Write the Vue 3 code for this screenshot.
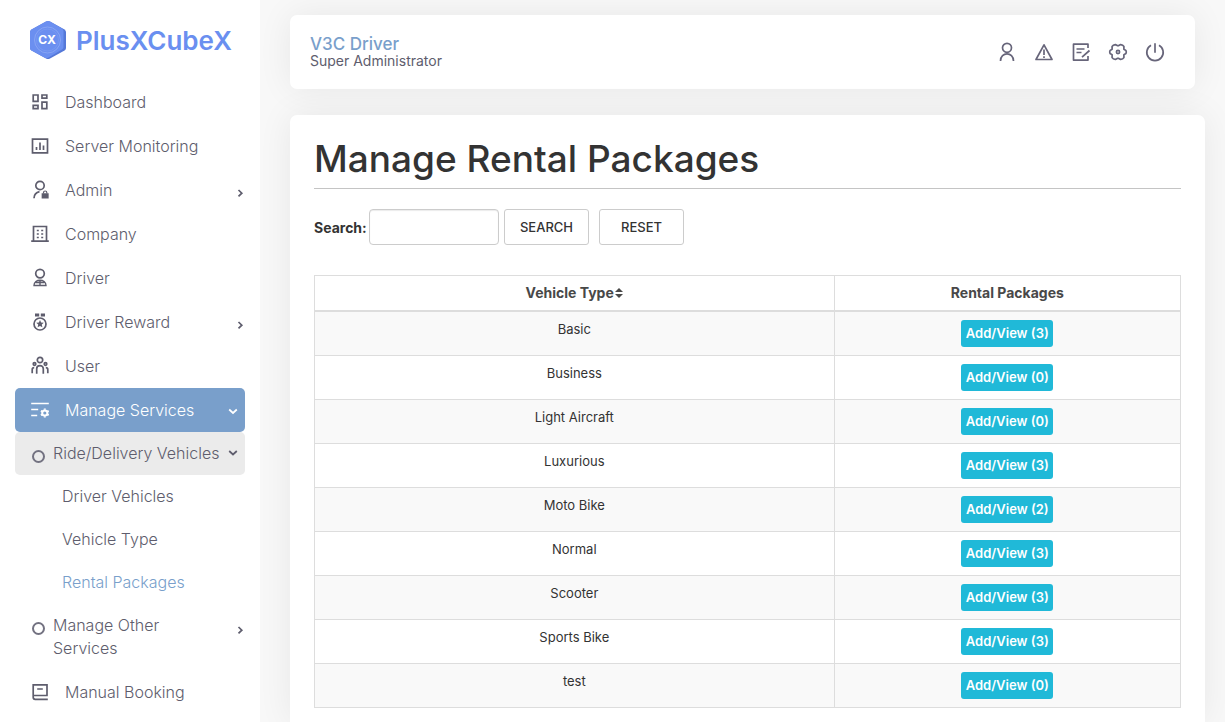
<script setup>
import { ref } from 'vue'

const search = ref('')

const topItems = [
  { label: 'Dashboard', icon: 'dashboard' },
  { label: 'Server Monitoring', icon: 'chart' },
  { label: 'Admin', icon: 'admin', arrow: true },
  { label: 'Company', icon: 'company' },
  { label: 'Driver', icon: 'driver' },
  { label: 'Driver Reward', icon: 'reward', arrow: true },
  { label: 'User', icon: 'users' },
]

const vehiclePages = [
  { label: 'Driver Vehicles' },
  { label: 'Vehicle Type' },
  { label: 'Rental Packages', current: true },
]

const rows = [
  { type: 'Basic', count: 3 },
  { type: 'Business', count: 0 },
  { type: 'Light Aircraft', count: 0 },
  { type: 'Luxurious', count: 3 },
  { type: 'Moto Bike', count: 2 },
  { type: 'Normal', count: 3 },
  { type: 'Scooter', count: 3 },
  { type: 'Sports Bike', count: 3 },
  { type: 'test', count: 0 },
]
</script>

<template>
  <div class="app">
    <aside class="sidebar">
      <a class="brand" href="#">
        <svg class="brand-mark" viewBox="0 0 36 38" aria-hidden="true">
          <path d="M16 .5q2-1 4 0l14.500 8Q36 9.500 36 11v16q0 1.500-1.500 2.500L20 37.500q-2 1-4 0L1.500 29.500Q0 28.500 0 27V11q0-1.500 1.500-2.500z" fill="#5578d8" />
          <path d="M16 .5q2-1 4 0l12 7Q33.500 8.500 33.500 10v16q0 1.500-1.500 2.500L18.500 36.500q-2 1-4 0L1.500 29.500Q0 28.500 0 27V11q0-1.500 1.500-2.500z" fill="#6b8ff0" />
          <circle cx="17.500" cy="19" r="13" fill="none" stroke="#8ea9f4" stroke-width=".8" />
          <circle cx="17.500" cy="19" r="11" fill="none" stroke="#7f9df2" stroke-width=".6" />
          <text x="17" y="23" text-anchor="middle">CX</text>
        </svg>
        <span class="brand-name">PlusXCubeX</span>
      </a>

      <nav class="nav">
        <a v-for="item in topItems" :key="item.label" class="nav-item" href="#">
          <svg class="nav-icon" viewBox="0 0 20 20" aria-hidden="true">
            <g v-if="item.icon === 'dashboard'">
              <path d="M3.200 3h4.800v6.400H3.200zM12 3h4.800v3.200H12zM3.200 13.400H8v3.200H3.200zM12 10.200h4.800v6.400H12z" />
            </g>
            <g v-else-if="item.icon === 'chart'">
              <path d="M2.500 3.200h15v13.600h-15z" />
              <path d="M6.500 11v3M10 6.500V14M13.500 9.500V14" />
            </g>
            <g v-else-if="item.icon === 'admin'">
              <circle cx="10" cy="5.500" r="4.200" />
              <path d="M4 18.200c.2-4 2-5.800 5.500-6.500" />
              <path class="solid" d="M12.500 14h5.300v3.700h-5.300z" />
              <path d="M13.500 13.500v-1c0-2 3.300-2 3.300 0v1" stroke-width="1.200" />
            </g>
            <g v-else-if="item.icon === 'company'">
              <path d="M3.500 17V2.500h13V17M1.200 17.200h17.600" />
              <path d="M6.800 6.500h2M11.200 6.500h2M6.800 10h2M11.200 10h2M6.800 13.500h2M11.200 13.500h2" />
            </g>
            <g v-else-if="item.icon === 'driver'">
              <circle cx="10" cy="5.600" r="4.300" />
              <path d="M4 17.500c0-7 12-7 12 0zM10 12.500v5M5.500 14.500h9" stroke-width="1.400" />
            </g>
            <g v-else-if="item.icon === 'reward'">
              <circle cx="10" cy="12" r="6" />
              <path class="solid" d="M5 1.500h4.200v3H5zM10.800 1.500H15v3h-4.200zM10 8l1.100 2.500 2.700.3-2 1.800.6 2.700L10 14l-2.400 1.300.6-2.700-2-1.800 2.700-.3z" stroke="none" />
            </g>
            <g v-else>
              <circle cx="10" cy="4" r="2.700" />
              <circle cx="4.500" cy="8" r="1.300" />
              <circle cx="15.500" cy="8" r="1.300" />
              <path d="M6.700 17.700v-5c0-4 6.600-4 6.600 0v5M2.200 17.200v-3.500q0-2 2-2M17.800 17.200v-3.500q0-2-2-2" />
            </g>
          </svg>
          <span class="nav-label">{{ item.label }}</span>
          <svg v-if="item.arrow" class="arrow" viewBox="0 0 10 10" aria-hidden="true"><path d="M3.500 2 6.800 5.200 3.500 8.400" /></svg>
        </a>

        <a class="nav-item active" href="#">
          <svg class="nav-icon" viewBox="0 0 20 20" aria-hidden="true">
            <path d="M1.200 3.500h17.600M1.200 9.500h7M1.200 15.500h6" />
            <circle cx="14.800" cy="13" r="2.600" stroke-width="2" />
            <path d="M14.800 8.500v1.300M14.800 16.200v1.300M10.900 10.800l1.200.6M17.500 14.600l1.200.6M10.900 15.200l1.200-.6M17.500 11.400l1.200-.6" stroke-width="2" />
          </svg>
          <span class="nav-label">Manage Services</span>
          <svg class="arrow open" viewBox="0 0 10 10" aria-hidden="true"><path d="M1.200 3.500 5 7l3.800-3.500" /></svg>
        </a>

        <a class="nav-item group selected" href="#">
          <span class="ring" aria-hidden="true"></span>
          <span class="nav-label">Ride/Delivery Vehicles</span>
          <svg class="arrow open" viewBox="0 0 10 10" aria-hidden="true"><path d="M1.200 1 5 4.500 8.800 1" /></svg>
        </a>
        <a
          v-for="page in vehiclePages"
          :key="page.label"
          class="nav-item leaf"
          :class="{ current: page.current }"
          href="#"
        >{{ page.label }}</a>
        <a class="nav-item group" href="#">
          <span class="ring" aria-hidden="true"></span>
          <span class="nav-label">Manage Other Services</span>
          <svg class="arrow first-line" viewBox="0 0 10 10" aria-hidden="true"><path d="M3.500 2 6.800 5.200 3.500 8.400" /></svg>
        </a>

        <a class="nav-item" href="#">
          <svg class="nav-icon" viewBox="0 0 20 20" aria-hidden="true">
            <path d="M17 13.500V2.800H3.200v12.500q0 2 2 2H17.800M3.500 13.500H17.800M7.200 7h5.600" />
          </svg>
          <span class="nav-label">Manual Booking</span>
        </a>
      </nav>
    </aside>

    <main class="main">
      <header class="topbar">
        <div class="who">
          <a class="who-name" href="#">V3C Driver</a>
          <span class="who-role">Super Administrator</span>
        </div>
        <div class="tools">
          <button type="button" aria-label="Profile">
            <svg viewBox="0 0 20 20"><circle cx="10" cy="5.800" r="4.500" /><path d="M3.500 19c0-9.500 13-9.500 13 0" /></svg>
          </button>
          <button type="button" aria-label="Alerts">
            <svg viewBox="0 0 20 20"><path d="M10 2.800 18 17.500H2zM10 7.500V13M10 14.200V16" /></svg>
          </button>
          <button type="button" aria-label="Notes">
            <svg viewBox="0 0 20 20"><path d="M17 6V2.200H2.500v15.900H17v-4M5.500 7h8M5.500 10.500h5M11 15.200l7.500-6.700" /></svg>
          </button>
          <button type="button" aria-label="Settings">
            <svg viewBox="0 0 20 20">
              <path d="M17.900 8.400Q18.700 10 17.900 11.600L15.900 12.700 15.900 15.600Q14.900 17.200 12.700 17.400L10.800 16.400H9.200L7.300 17.400Q5.100 17.200 4.100 15.600L4.100 12.700 2.100 11.600Q1.300 10 2.100 8.400L4.100 7.300 4.100 4.400Q5.100 2.800 7.300 2.600L9.200 3.600H10.800L12.700 2.600Q14.900 2.800 15.900 4.400L15.900 7.300Z" />
              <circle cx="10" cy="10" r="1.600" />
            </svg>
          </button>
          <button type="button" aria-label="Log out">
            <svg viewBox="0 0 20 20"><path d="M10 1.200v9.500M6 3.200a8.200 8.200 0 1 0 8 0" /></svg>
          </button>
        </div>
      </header>

      <section class="card">
        <h1>Manage Rental Packages</h1>

        <form class="filter" @submit.prevent>
          <label for="search">Search:</label>
          <input id="search" v-model="search" type="text" />
          <button type="submit">SEARCH</button>
          <button type="button" class="reset" @click="search = ''">RESET</button>
        </form>

        <table>
          <thead>
            <tr>
              <th class="col-type">
                <a href="#">Vehicle Type <svg class="sort" viewBox="0 0 8 12" aria-hidden="true"><path d="M0 5h8L4 1zM0 7h8l-4 4z" /></svg></a>
              </th>
              <th>Rental Packages</th>
            </tr>
          </thead>
          <tbody>
            <tr v-for="row in rows" :key="row.type">
              <td>{{ row.type }}</td>
              <td><a class="view" href="#">Add/View ({{ row.count }})</a></td>
            </tr>
          </tbody>
        </table>
      </section>
    </main>
  </div>
</template>

<style>
body {
  margin: 0;
  background: #f8f8f8;
}
</style>

<style scoped>
* {
  box-sizing: border-box;
}

.app {
  display: flex;
  min-height: 100vh;
  font-family: Inter, "Open Sans", sans-serif;
  font-size: 13px;
  color: #333;
}

a {
  color: inherit;
  text-decoration: none;
}

svg {
  fill: none;
  stroke: currentColor;
  stroke-width: 1.7;
}

.sidebar {
  flex: 0 0 260px;
  padding: 0 15px;
  background: #fff;
}

.brand {
  display: flex;
  align-items: center;
  gap: 10px;
  height: 80px;
  padding-left: 15px;
  color: #6a8ff0;
}

.brand-mark {
  width: 36px;
  height: 38px;
  stroke: none;
}

.brand-mark text {
  fill: #fff;
  font-size: 12px;
  font-weight: 700;
}

.brand-name {
  font-size: 26px;
  font-weight: 600;
}

.nav {
  display: flex;
  flex-direction: column;
}

.nav-item {
  display: flex;
  align-items: center;
  min-height: 44px;
  padding-left: 15px;
  border-radius: 5px;
  color: #5e5d6d;
  font-size: 16px;
  font-weight: 300;
  line-height: 23px;
}

.nav-icon {
  flex: none;
  width: 20px;
  height: 20px;
  margin-right: 15px;
}

.nav-label {
  flex: 1;
}

.solid {
  fill: currentColor;
}

.arrow {
  flex: none;
  width: 10px;
  height: 10px;
  margin: 5px 0 0;
}

.arrow.open {
  margin: 2px 7px 0 0;
}

.arrow.first-line {
  align-self: flex-start;
  margin-top: 11px;
}

.active {
  background: #799fcb;
  color: #fff;
}

.group {
  min-height: 43px;
  padding: 10px 0 10px 17px;
}

.group .nav-label {
  padding-right: 20px;
}

.selected {
  background: #ebebeb;
}

.group.selected .nav-label {
  padding-right: 0;
  white-space: nowrap;
}

.ring {
  flex: none;
  align-self: flex-start;
  width: 13px;
  height: 13px;
  margin: 8px 8px 0 0;
  border: 2px solid #737281;
  border-radius: 50%;
}

.leaf {
  min-height: 43px;
  padding-left: 47px;
}

.current {
  color: #799fcb;
}

.main {
  display: flex;
  flex: 1;
  flex-direction: column;
  gap: 26px;
  min-width: 0;
  padding: 15px 20px 0 30px;
}

.topbar {
  display: flex;
  align-items: center;
  justify-content: space-between;
  height: 74px;
  margin-right: 10px;
  padding: 0 30px 0 20px;
  border-radius: 7px;
  background: #fff;
  box-shadow: 0 0 35px rgba(0, 0, 0, .07);
}

.who {
  display: flex;
  flex-direction: column;
}

.who-name {
  color: #799fcb;
  font-size: 17px;
  font-weight: 500;
  line-height: 18px;
}

.who-role {
  color: #5e5d6d;
  font-size: 14px;
  line-height: 16px;
}

.tools {
  display: flex;
  gap: 17px;
}

.tools button {
  width: 20px;
  height: 20px;
  padding: 0;
  border: 0;
  background: none;
  color: #67657a;
}

.tools svg {
  display: block;
  stroke-linejoin: round;
}

.card {
  flex: 1;
  padding: 20px 24px 13px;
  border-radius: 7px 7px 0 0;
  background: #fff;
  box-shadow: 0 0 35px rgba(0, 0, 0, .07);
}

h1 {
  margin: 0 0 20px;
  padding-bottom: 5px;
  border-bottom: 1px solid #c4c4c4;
  font-size: 37px;
  font-weight: 500;
  line-height: 48px;
}

.filter {
  display: flex;
  align-items: center;
  margin-bottom: 30px;
}

.filter label {
  width: 55px;
  font-size: 14px;
  font-weight: 700;
}

.filter input {
  width: 130px;
  height: 36px;
  padding: 0 10px;
  border: 1px solid #ccc;
  border-radius: 4px;
  box-shadow: inset 0 1px 1px rgba(0, 0, 0, .08);
  font: inherit;
}

.filter button {
  width: 85px;
  height: 36px;
  margin-left: 5px;
  padding: 0;
  border: 1px solid #ccc;
  border-radius: 3px;
  background: #fff;
  color: #333;
  font: inherit;
  font-weight: 500;
}

.filter .reset {
  margin-left: 10px;
}

table {
  width: 100%;
  border-collapse: collapse;
  table-layout: fixed;
}

th,
td {
  padding: 8px;
  border: 1px solid #ddd;
  line-height: 19px;
  text-align: center;
  vertical-align: top;
}

th {
  padding: 7px 8px 8px;
  border-bottom-width: 2px;
  color: #484848;
  font-size: 14px;
  font-weight: 700;
}

.col-type {
  width: 60%;
}

.sort {
  width: 8px;
  height: 12px;
  margin-left: -2px;
  fill: currentColor;
  stroke: none;
  vertical-align: -1px;
}

tbody tr:nth-child(odd) {
  background: #f9f9f9;
}

.view {
  display: block;
  width: 92px;
  margin: 0 auto;
  border-radius: 3px;
  background: #20b9d8;
  color: #fff;
  font-weight: 600;
  line-height: 27px;
}
</style>
